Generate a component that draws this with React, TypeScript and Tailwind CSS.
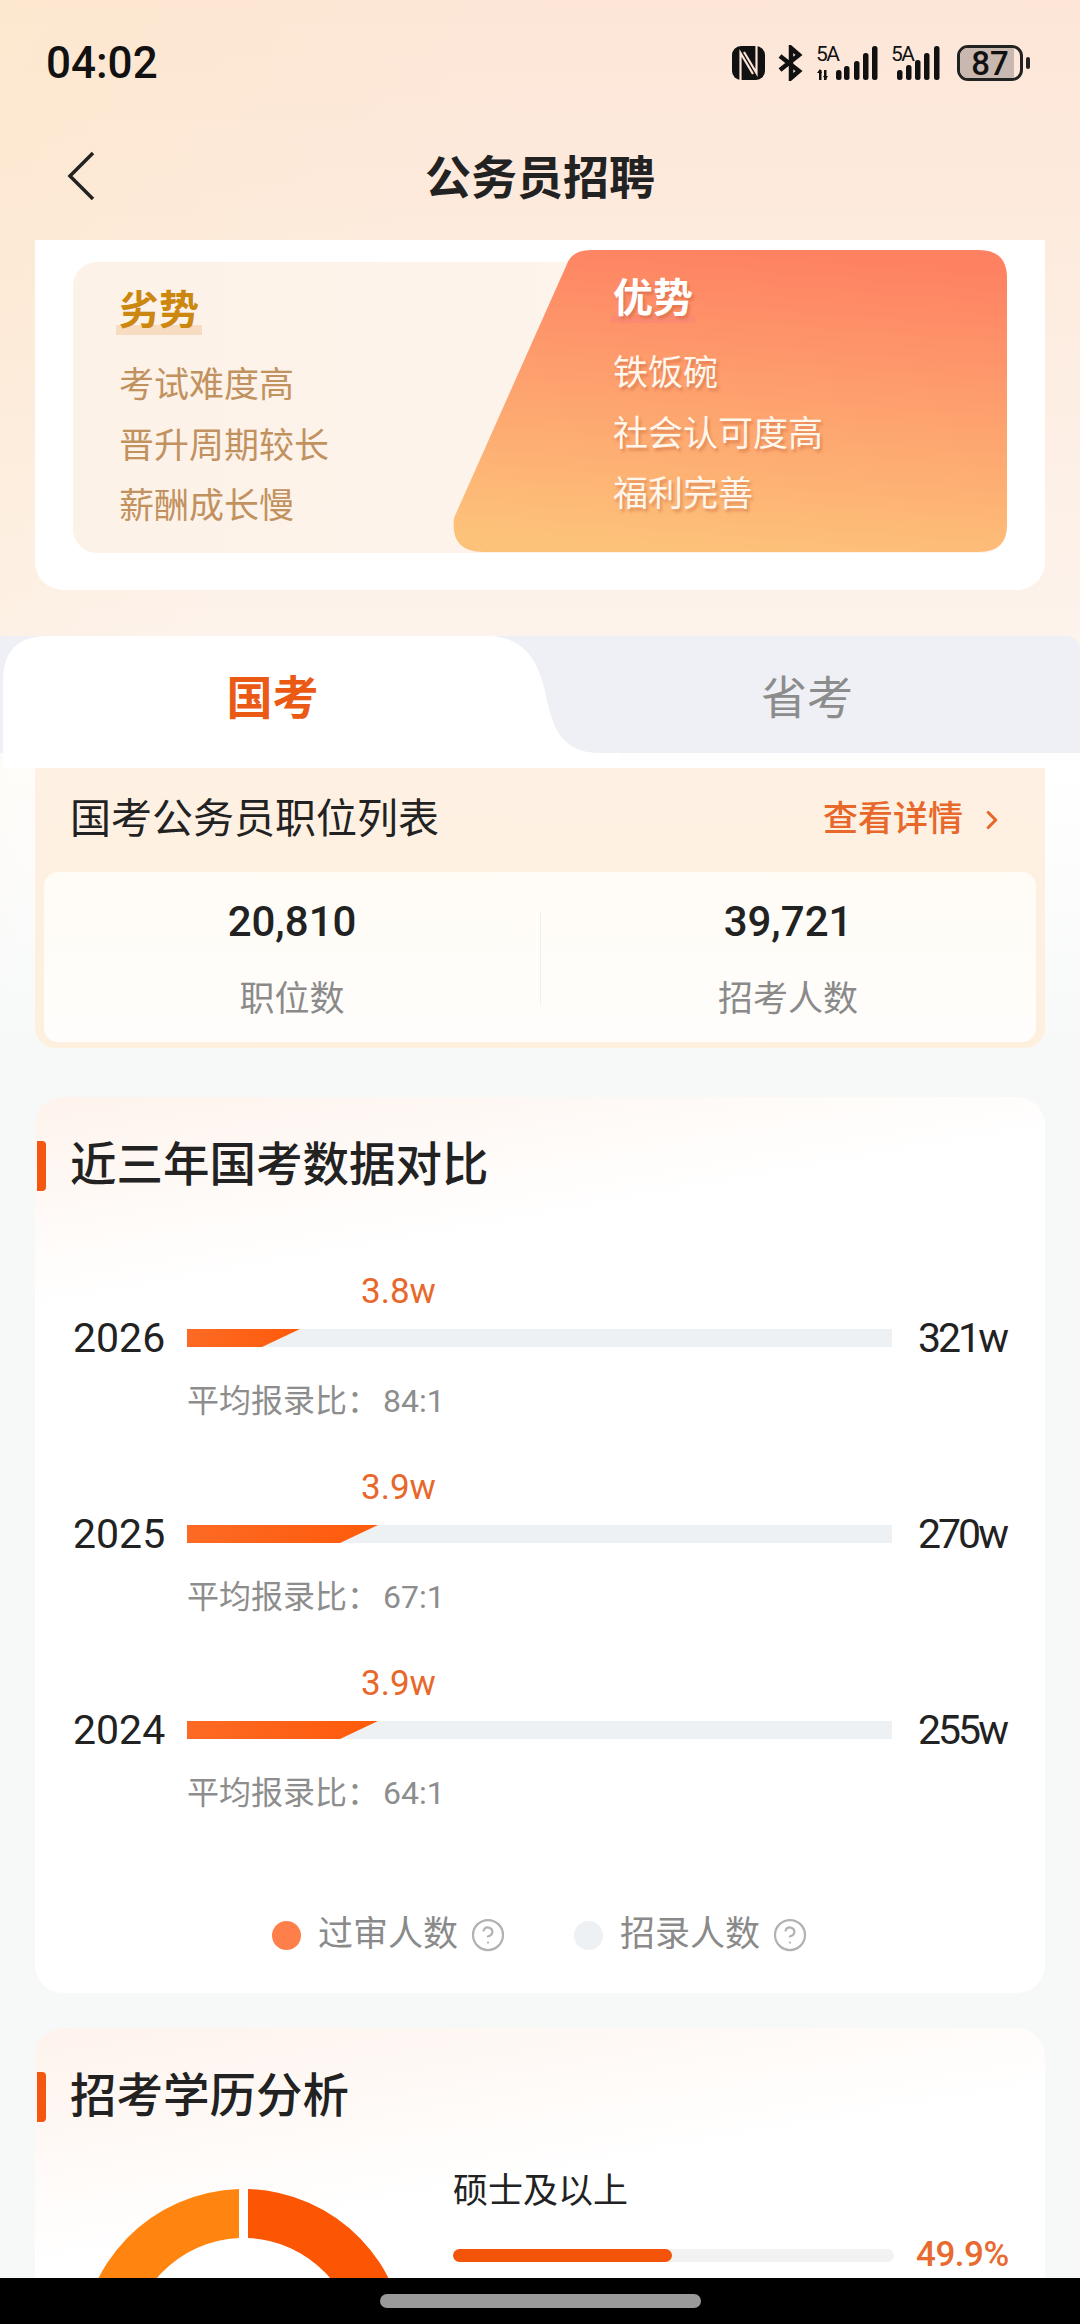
import { ChevronRight, CircleHelp } from 'lucide-react';

const FONT = "font-['Roboto','Noto_Sans_CJK_SC',sans-serif]";

const years = [
  { year: '2026', passed: '3.8w', applied: '321w', ratio: '84:1', fill: 113 },
  { year: '2025', passed: '3.9w', applied: '270w', ratio: '67:1', fill: 191 },
  { year: '2024', passed: '3.9w', applied: '255w', ratio: '64:1', fill: 191 },
];

function Signal({ roaming, bars, width }: { roaming?: boolean; bars: number[][]; width: number }) {
  return (
    <svg width={width} height={44} viewBox={`0 -4 ${width} 44`} fill="#111">
      <text x={0} y={16} fontSize={21} fontFamily="Roboto, sans-serif" textLength={24}>
        5A
      </text>
      {roaming && (
        <>
          <rect x={3} y={25} width={2.5} height={10} />
          <rect x={8} y={25} width={2.5} height={10} />
          <path d="M1 28l3-4 2 4zM7 31l2.500 4 2.500-4z" />
        </>
      )}
      {bars.map(([x, top]) => (
        <rect key={x} x={x} y={top} width={5.500} height={35 - top} rx={2.500} />
      ))}
    </svg>
  );
}

function StatusIcons() {
  return (
    <div className="flex items-center gap-[13px]">
      <svg width={33} height={34} viewBox="0 0 33 34" fill="none">
        <rect width={33} height={34} rx={9} fill="#111" />
        <path d="M8.500 34V7L21 28M24.500 0V27L12 6" stroke="#fde4d6" strokeWidth={2.200} />
      </svg>
      <svg width={25} height={36} viewBox="0 0 25 36" fill="none" stroke="#111" strokeWidth={4.500}>
        <path d="M2 11l19 15-8 7V3l8 7L2 25" />
      </svg>
      <Signal roaming width={62} bars={[[20, 25], [28, 21], [38, 16], [47, 8], [56, 1]]} />
      <Signal width={53} bars={[[6, 25], [15, 20], [24, 15], [33, 8], [43, 1]]} />
      <div className="flex items-center gap-[3px]">
        <div className="relative flex h-[36px] w-[66px] items-center justify-center overflow-hidden rounded-[11px] border-[3px] border-[#222]">
          <div className="absolute inset-y-0 left-0 w-[54px] bg-[#c8b8b0]" />
          <span className="relative text-[33px] leading-none font-medium text-[#111]">87</span>
        </div>
        <div className="h-[12px] w-[4px] rounded-full bg-[#222]" />
      </div>
    </div>
  );
}

function ProsCons() {
  return (
    <div className="mx-[35px] h-[350px] rounded-b-[28px] bg-white px-[38px] pt-[22px]">
      <div className="relative flex h-[291px] rounded-[24px] bg-[linear-gradient(90deg,#fdf2e8,#fdf5ee)]">
        <svg className="absolute top-[-12px] left-[380px]" width={554} height={303} viewBox="0 0 554 303">
          <defs>
            <linearGradient id="pros" x1="0.6" y1="0" x2="0.45" y2="1">
              <stop offset="0" stopColor="#fe8162" />
              <stop offset="1" stopColor="#fdc27a" />
            </linearGradient>
          </defs>
          <path
            d="M138 0H526Q554 0 554 28V275Q554 302 526 302H30Q-3 302 1 268L114 14Q119 0 138 0Z"
            fill="url(#pros)"
          />
        </svg>
        <div className="relative w-[540px] pt-[25px] pl-[46px]">
          <div className="relative h-[48px] w-fit text-[40px] leading-[48px] font-bold text-[#cb870f]">
            <div className="absolute inset-x-[-3px] top-[38px] h-[10px] bg-[#f8dcc2]" />
            <span className="relative">劣势</span>
          </div>
          <div className="mt-[21px] text-[35px] leading-[60.5px] text-[#c19260]">
            <div>考试难度高</div>
            <div>晋升周期较长</div>
            <div>薪酬成长慢</div>
          </div>
        </div>
        <div className="relative flex-1 pt-[13px] text-white [text-shadow:2px_3px_3px_rgba(190,90,50,0.45)]">
          <div className="relative h-[48px] w-fit text-[40px] leading-[48px] font-bold">
            <div className="absolute inset-x-[-2px] top-[40px] h-[8px] bg-[#fc8a70]" />
            <span className="relative">优势</span>
          </div>
          <div className="mt-[21px] text-[35px] leading-[60.5px] text-[#fff6ec]">
            <div>铁饭碗</div>
            <div>社会认可度高</div>
            <div>福利完善</div>
          </div>
        </div>
      </div>
    </div>
  );
}

function Tabs() {
  return (
    <div className="relative mt-[46px] h-[132px]">
      <div className="h-[117px] rounded-tr-[14px] bg-[#eef0f5]" />
      <svg className="absolute top-0 left-0" width={620} height={132} viewBox="0 0 620 132">
        <path d="M3 132V45Q3 0 48 0H490C525 2 538 25 545 55C552 90 560 117 600 117H620V132Z" fill="#fff" />
      </svg>
      <div className="absolute inset-0 flex">
        <div className="flex h-[124px] w-[545px] items-center justify-center text-[46px] font-bold text-[#ea5a14]">
          国考
        </div>
        <div className="flex h-[124px] flex-1 items-center justify-center pr-[175px] pl-[164px] text-[46px] text-[#8c8c8c]">
          省考
        </div>
      </div>
    </div>
  );
}

function PositionList() {
  return (
    <div className="mx-[35px] h-[280px] rounded-b-[20px] bg-[linear-gradient(180deg,#fef1e3,#fdf0df)] px-[9px]">
      <div className="flex h-[104px] items-center justify-between pr-[29px] pl-[26px]">
        <span className="text-[41px] text-[#222]">国考公务员职位列表</span>
        <span className="flex items-center text-[35px] font-medium text-[#e8672a]">
          查看详情
          <ChevronRight size={30} strokeWidth={2.500} className="ml-[14px]" />
        </span>
      </div>
      <div className="relative flex h-[170px] rounded-[14px] bg-[linear-gradient(180deg,#fffcf6,#fffdfb)]">
        <div className="absolute top-[40px] left-[496px] h-[93px] w-px bg-[#f0eeeb]" />
        {[
          ['20,810', '职位数'],
          ['39,721', '招考人数'],
        ].map(([value, label]) => (
          <div key={label} className="flex flex-1 flex-col items-center">
            <span className="mt-[22px] h-[56px] text-[42px] leading-[56px] font-medium text-[#222]">{value}</span>
            <span className="mt-[22px] h-[56px] text-[35px] leading-[56px] text-[#8a8a8a]">{label}</span>
          </div>
        ))}
      </div>
    </div>
  );
}

function SectionTitle({ children }: { children: string }) {
  return (
    <div className="flex h-[60px] items-center gap-[24px] pl-[2px]">
      <div className="h-[50px] w-[9px] rounded-r-[4px] bg-[#f4570f]" />
      <span className="text-[46.5px] font-medium text-[#222]">{children}</span>
    </div>
  );
}

function YearRow({ year, passed, applied, ratio, fill }: (typeof years)[number]) {
  return (
    <div className="h-[196px]">
      <div className="h-[44px] pl-[326px] text-[35px] leading-[44px] text-[#e8672a]">{passed}</div>
      <div className="flex h-[48px] items-center pl-[38px] text-[41px] text-[#222]">
        <span className="mt-[2px] w-[114px]">{year}</span>
        <div className="h-[18px] w-[705px] bg-[#edf1f4]">
          <div
            className="h-full bg-[linear-gradient(90deg,#fd6a25,#ff5a0a)] [clip-path:polygon(0_0,100%_0,calc(100%-38px)_100%,0_100%)]"
            style={{ width: fill }}
          />
        </div>
        <span className="mt-[2px] ml-[26px] tracking-[-3px]">{applied}</span>
      </div>
      <div className="mt-[19px] h-[40px] pl-[152px] text-[32px] leading-[40px] text-[#8d8d8d]">
        平均报录比：<span className="ml-[4px]">{ratio}</span>
      </div>
    </div>
  );
}

function LegendItem({ dot, label }: { dot: string; label: string }) {
  return (
    <div className="flex items-center">
      <div className={`size-[29px] rounded-full ${dot}`} />
      <span className="ml-[17px] text-[35px] text-[#8a8a8a]">{label}</span>
      <CircleHelp size={36} strokeWidth={1.500} className="ml-[12px] text-[#b2b2b2]" />
    </div>
  );
}

function Education() {
  return (
    <div className="mx-[35px] mt-[35px] h-[260px] overflow-hidden rounded-t-[28px] bg-[linear-gradient(170deg,#fef3ec,#ffffff_55%)] pt-[39px]">
      <SectionTitle>招考学历分析</SectionTitle>
      <div className="flex">
        <svg className="mt-[62px] ml-[46px] shrink-0" width={325} height={325} viewBox="0 0 325 325">
          <path d="M158 0A162.500 162.500 0 0 0 0 162.500H49A113.500 113.500 0 0 1 158 49Z" fill="#ff8510" />
          <path d="M167 0A162.500 162.500 0 0 1 325 162.500H276A113.500 113.500 0 0 0 167 49Z" fill="#fc5503" />
        </svg>
        <div className="mt-[43px] ml-[47px]">
          <div className="h-[44px] text-[35px] leading-[44px] text-[#222]">硕士及以上</div>
          <div className="mt-[16px] flex h-[50px] items-center">
            <div className="h-[13px] w-[441px] rounded-full bg-[#f2f2f2]">
              <div className="h-full w-[219px] rounded-full bg-[#f4540a]" />
            </div>
            <span className="ml-[22px] text-[35px] font-medium tracking-[-0.500px] text-[#e86a2f]">49.9%</span>
          </div>
        </div>
      </div>
    </div>
  );
}

export default function App() {
  return (
    <div
      className={`${FONT} flex h-[2324px] w-[1080px] flex-col overflow-hidden bg-[linear-gradient(120deg,rgba(253,232,200,0.55),rgba(253,232,200,0)_500px),linear-gradient(180deg,#fde6d8,#fdebde_240px,#fdf3ec_636px,#ffffff_768px,#f7f8f8_1050px,#f7f8f8)]`}
    >
      <div className="flex-1 overflow-hidden">
        <div className="flex h-[126px] items-center justify-between pr-[50px] pl-[46px]">
          <span className="text-[44px] font-medium text-[#111]">04:02</span>
          <StatusIcons />
        </div>
        <div className="mb-[14px] grid h-[100px] grid-cols-[1fr_auto_1fr] items-center">
          <svg className="ml-[66px]" width={30} height={50} viewBox="0 0 30 50" fill="none" stroke="#222" strokeWidth={3.500}>
            <path d="M27 2L4 25l23 23" />
          </svg>
          <span className="mt-[4px] text-[46px] font-bold text-[#222]">公务员招聘</span>
        </div>
        <ProsCons />
        <Tabs />
        <PositionList />
        <div className="mx-[35px] mt-[49px] h-[896px] rounded-[28px] bg-[linear-gradient(170deg,#fef3ec,#ffffff_20%)] pt-[39px]">
          <SectionTitle>近三年国考数据对比</SectionTitle>
          <div className="mt-[74px]">
            {years.map((row) => (
              <YearRow key={row.year} {...row} />
            ))}
          </div>
          <div className="mt-[55px] flex h-[44px] items-center justify-center gap-[68px]">
            <LegendItem dot="bg-[#ff7f4a]" label="过审人数" />
            <LegendItem dot="bg-[#edf1f4]" label="招录人数" />
          </div>
        </div>
        <Education />
      </div>
      <div className="flex h-[46px] shrink-0 items-center justify-center bg-black">
        <div className="h-[14px] w-[321px] rounded-full bg-[#9a9a9a]" />
      </div>
    </div>
  );
}
